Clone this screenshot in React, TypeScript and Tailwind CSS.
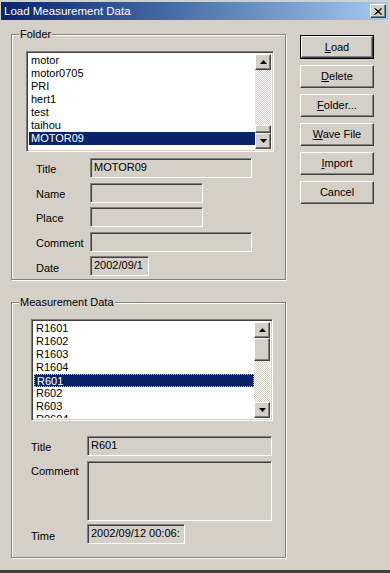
import React from 'react';

const sunken =
  'border border-t-[#808080] border-l-[#808080] border-b-white border-r-white shadow-[inset_1px_1px_0_#404040,inset_-1px_-1px_0_#d4d0c8]';
const raised =
  'border border-t-white border-l-white border-b-[#404040] border-r-[#404040] shadow-[inset_-1px_-1px_0_#808080,inset_1px_1px_0_#d4d0c8]';

function Arrow({ up }: { up?: boolean }) {
  return (
    <div className={`w-[16px] h-[16px] shrink-0 bg-[#d4d0c8] flex items-center justify-center ${raised}`}>
      <svg width="7" height="4" viewBox="0 0 7 4">
        {up ? <path d="M3.5 0 L7 4 L0 4 Z" fill="#000" /> : <path d="M0 0 L7 0 L3.5 4 Z" fill="#000" />}
      </svg>
    </div>
  );
}

function Scrollbar({ thumbTop, thumbHeight }: { thumbTop: boolean; thumbHeight: number }) {
  return (
    <div className="w-[16px] flex flex-col shrink-0">
      <Arrow up />
      <div className="flex-1 flex flex-col bg-[image:repeating-conic-gradient(#ffffff_0%_25%,#d4d0c8_0%_50%)] bg-[length:2px_2px]">
        {!thumbTop && <div className="flex-1" />}
        <div className={`w-[16px] bg-[#d4d0c8] ${raised}`} style={{ height: thumbHeight }} />
      </div>
      <Arrow />
    </div>
  );
}

function ListBox({
  items,
  selected,
  focus,
  thumbTop,
  thumbHeight,
  className,
}: {
  items: string[];
  selected: string;
  focus?: boolean;
  thumbTop: boolean;
  thumbHeight: number;
  className: string;
}) {
  return (
    <div className={`bg-white flex p-[2px] ${sunken} ${className}`}>
      <div className="flex-1 overflow-hidden">
        {items.map((it) => (
          <div
            key={it}
            className={`h-[13px] leading-[13px] pl-[2px] whitespace-nowrap ${
              it === selected
                ? focus
                  ? 'bg-[#0a246a] text-white border border-dotted border-[#b8c0dc] pl-[1px] leading-[11px]'
                  : 'bg-[#0a246a] text-white'
                : 'text-black'
            }`}
          >
            {it}
          </div>
        ))}
      </div>
      <Scrollbar thumbTop={thumbTop} thumbHeight={thumbHeight} />
    </div>
  );
}

function Field({ value, className }: { value?: string; className: string }) {
  return (
    <div className={`bg-[#d4d0c8] pl-[3px] pt-[2px] leading-[13px] overflow-hidden whitespace-nowrap ${sunken} ${className}`}>
      {value}
    </div>
  );
}

function Group({ label, className, children }: { label: string; className: string; children: React.ReactNode }) {
  return (
    <div className={`relative border border-[#808080] shadow-[1px_1px_0_#ffffff,inset_1px_1px_0_#ffffff] ${className}`}>
      <span className="absolute -top-[7px] left-[7px] bg-[#d4d0c8] px-[1px] leading-[13px]">{label}</span>
      {children}
    </div>
  );
}

function Button({ children, isDefault }: { children: React.ReactNode; isDefault?: boolean }) {
  if (isDefault) {
    return (
      <div className="w-[74px] h-[24px] border border-black flex">
        <div className={`flex-1 bg-[#d4d0c8] flex items-center justify-center ${raised}`}>{children}</div>
      </div>
    );
  }
  return (
    <div className={`w-[74px] h-[23px] bg-[#d4d0c8] flex items-center justify-center ${raised}`}>{children}</div>
  );
}

export default function App() {
  return (
    <div className="w-[390px] h-[573px] bg-[#d4d0c8] font-['Liberation_Sans',Arial,sans-serif] text-[11px] text-black flex flex-col pt-[2px] pl-[1px] pr-[2px] border-b-[3px] border-b-[#404040] overflow-hidden">
      <div className="h-[18px] shrink-0 flex items-center justify-between pl-[3px] pr-[2px] bg-gradient-to-r from-[#0a246a] to-[#a6caf0]">
        <span className="text-white text-[11.5px] leading-[13px]">Load Measurement Data</span>
        <div className={`w-[16px] h-[14px] bg-[#d4d0c8] flex items-center justify-center ${raised}`}>
          <svg width="8" height="7" viewBox="0 0 8 7">
            <path d="M0.5 0.5 L7 6.5 M1.5 0.5 L8 6.5 M7 0.5 L0.5 6.5 M8 0.5 L1.5 6.5" stroke="#000" strokeWidth="1" />
          </svg>
        </div>
      </div>

      <div className="flex pt-[14px] pl-[10px]">
        <div className="flex flex-col w-[275px]">
          <Group label="Folder" className="h-[246px] pl-[14px] pt-[16px]">
            <ListBox
              items={['motor', 'motor0705', 'PRI', 'hert1', 'test', 'taihou', 'MOTOR09']}
              selected="MOTOR09"
              thumbTop={false}
              thumbHeight={8}
              className="w-[248px] h-[101px]"
            />
            <div className="ml-[10px] mt-[6px] flex flex-col">
              <div className="flex items-center h-[20px]">
                <span className="w-[54px] pt-[3px]">Title</span>
                <Field value="MOTOR09" className="w-[162px] h-[20px]" />
              </div>
              <div className="flex items-center h-[20px] mt-[5px]">
                <span className="w-[54px] pt-[3px]">Name</span>
                <Field className="w-[113px] h-[20px]" />
              </div>
              <div className="flex items-center h-[20px] mt-[4px]">
                <span className="w-[54px] pt-[3px]">Place</span>
                <Field className="w-[113px] h-[20px]" />
              </div>
              <div className="flex items-center h-[20px] mt-[5px]">
                <span className="w-[54px] pt-[3px]">Comment</span>
                <Field className="w-[162px] h-[20px]" />
              </div>
              <div className="flex items-center h-[20px] mt-[4px]">
                <span className="w-[54px] pt-[4px]">Date</span>
                <Field value="2002/09/1" className="w-[59px] h-[20px]" />
              </div>
            </div>
          </Group>

          <Group label="Measurement Data" className="mt-[22px] h-[256px] pl-[19px] pt-[16px]">
            <ListBox
              items={['R1601', 'R1602', 'R1603', 'R1604', 'R601', 'R602', 'R603', 'R0604']}
              selected="R601"
              focus
              thumbTop
              thumbHeight={23}
              className="w-[242px] h-[102px]"
            />
            <div className="mt-[15px] flex flex-col">
              <div className="flex items-center h-[20px]">
                <span className="w-[56px] pt-[2px]">Title</span>
                <Field value="R601" className="w-[185px] h-[20px]" />
              </div>
              <div className="flex items-start mt-[5px]">
                <span className="w-[56px] pt-[2px]">Comment</span>
                <Field className="w-[185px] h-[60px]" />
              </div>
              <div className="flex items-center h-[20px] mt-[3px]">
                <span className="w-[56px] pt-[4px]">Time</span>
                <Field value="2002/09/12 00:06:" className="w-[98px] h-[20px]" />
              </div>
            </div>
          </Group>
        </div>

        <div className="ml-[14px] mt-[1px] flex flex-col gap-[6px]">
          <Button isDefault>
            <span><u>L</u>oad</span>
          </Button>
          <Button>
            <span><u>D</u>elete</span>
          </Button>
          <Button>
            <span><u>F</u>older...</span>
          </Button>
          <Button>
            <span><u>W</u>ave File</span>
          </Button>
          <Button>
            <span><u>I</u>mport</span>
          </Button>
          <Button>
            <span>Cancel</span>
          </Button>
        </div>
      </div>
    </div>
  );
}
